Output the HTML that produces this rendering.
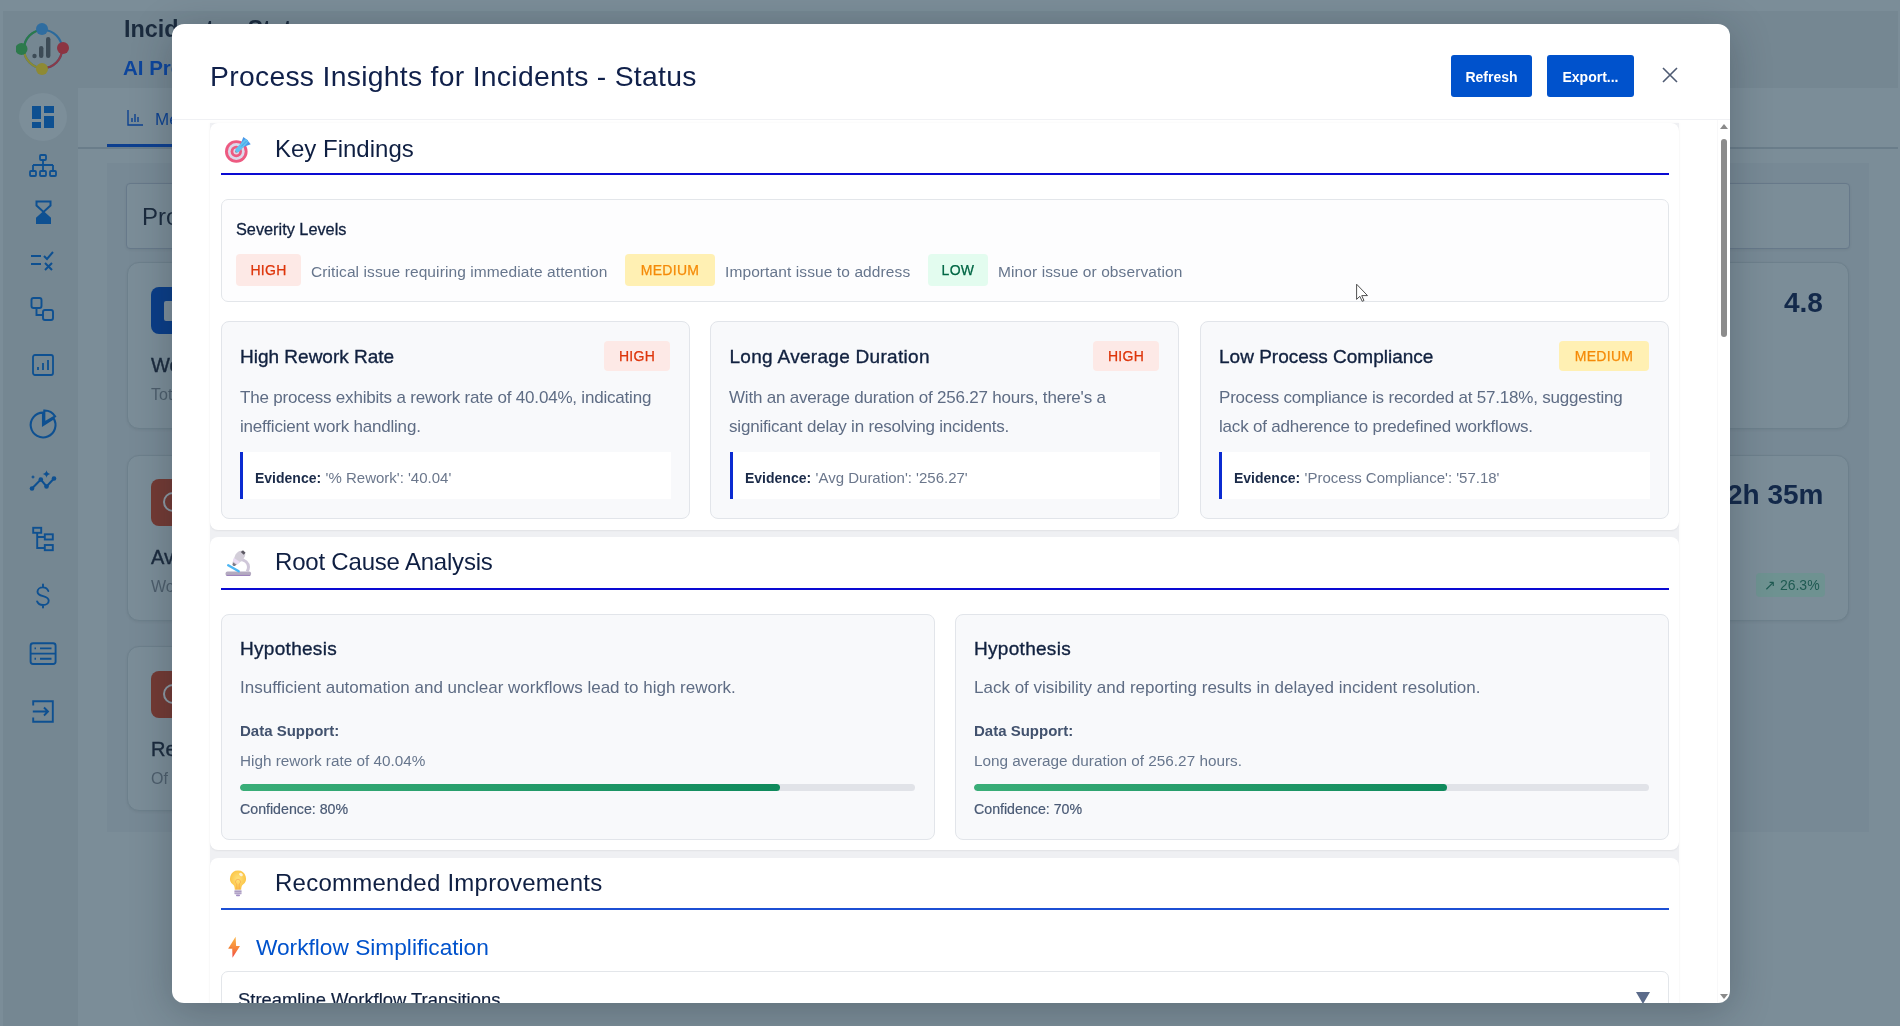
<!DOCTYPE html>
<html><head><meta charset="utf-8">
<style>
*{box-sizing:border-box;margin:0;padding:0}
html,body{width:1900px;height:1026px;overflow:hidden}
body{background:#7b8d98;font-family:"Liberation Sans",sans-serif;position:relative}
.a{position:absolute}
.t{position:absolute;line-height:1;white-space:nowrap}
/* background page */
#side{left:3px;top:11px;width:75px;height:1015px;background:#758792}
#hdr{left:78px;top:11px;width:1820px;height:77px;background:#758792}
#tabs{left:78px;top:88px;width:1820px;height:61px;background:#7b8d98;border-bottom:2px solid #6a7d8a}
#panel{left:107px;top:163px;width:1762px;height:669px;background:#778995}
.bgcard{position:absolute;background:#7b8d98;border:1px solid #6d808c;border-radius:12px;box-shadow:0 1px 3px rgba(0,0,0,.06)}
.sico{position:absolute;left:28px;width:30px;height:30px}
/* modal */
#modal{will-change:transform;left:172px;top:24px;width:1558px;height:979px;background:#fff;border-radius:12px;overflow:hidden;box-shadow:0 8px 40px rgba(20,30,40,.28)}
#inner{position:absolute;left:-172px;top:-24px;width:1900px;height:1026px}
#mhb{position:absolute;left:172px;top:119px;width:1558px;height:1px;background:#f0f1f4}
.btn{position:absolute;top:55px;height:42px;background:#0052cc;color:#fff;font-weight:bold;font-size:14px;line-height:45px;text-align:center;border-radius:3px}
.sec{position:absolute;left:210px;width:1469px;background:#fff;border-radius:8px;box-shadow:0 1px 2px rgba(0,0,0,.06)}
.ul{position:absolute;left:221px;width:1448px;height:2px}
.h2{font-size:24px;color:#0f1f42}
.box{position:absolute;border:1px solid #e3e6ea;border-radius:7px}
.fc{position:absolute;top:321px;width:469px;height:198px;background:#f8f9fb;border:1px solid #e2e5ea;border-radius:8px}
.badge{position:absolute;height:32px;border-radius:4px;font-size:14px;line-height:32px;text-align:center;letter-spacing:.3px;-webkit-text-stroke:.25px currentColor}
.high{background:#fde9e6;color:#de350b}
.med{background:#fff0b3;color:#f58a07}
.low{background:#e3fcef;color:#006644}
.sevd{font-size:15.5px;color:#67768d;letter-spacing:.1px}
.ftitle{font-size:19px;color:#11213f;-webkit-text-stroke:.35px #11213f}
.fdesc{position:absolute;font-size:17px;line-height:28.5px;color:#5e6c84;white-space:nowrap}
.ev{position:absolute;top:452px;height:47px;background:#fff;border-left:3px solid #0b2bd1}
.evk{font-size:14px;font-weight:bold;color:#1a2a48}
.evv{font-size:15px;color:#6b778c}
.hc{position:absolute;top:614px;width:714px;height:225px;background:#f8f9fb;border:1px solid #e2e5ea;border-radius:8px}
.prog{position:absolute;top:784px;width:675px;height:7px;border-radius:4px;background:#e1e3e8;overflow:hidden}
.prog i{display:block;height:100%;border-radius:4px;background:linear-gradient(90deg,#3aae78,#0f8a5c)}
</style></head><body>
<div id="root" style="position:absolute;left:0;top:0;width:1900px;height:1026px;will-change:transform">
<!-- ============ BACKGROUND PAGE ============ -->
<div id="side" class="a"></div>
<div id="hdr" class="a"></div>
<div id="tabs" class="a"></div>
<div id="panel" class="a"></div>
<div class="t" style="left:124px;top:18px;font-size:23.4px;font-weight:bold;color:#1b2b3e">Incidents - Status</div>
<div class="t" style="left:123px;top:58px;font-size:20.5px;font-weight:bold;color:#0d459c">AI Process Insights</div>
<div class="a" style="left:107px;top:144px;width:80px;height:3px;background:#0d3f8f"></div>
<svg class="a" style="left:126px;top:109px" width="18" height="18" viewBox="0 0 18 18" fill="none" stroke="#0e4290" stroke-width="1.4"><path d="M2 1v15h15M6 9v4M9 5v8M12 8v5"/></svg>
<div class="t" style="left:155px;top:111px;font-size:17px;color:#0e4290">Metrics</div>
<div class="bgcard" style="left:126px;top:183px;width:1724px;height:66px;border-radius:4px;border-color:#67798a"></div>
<div class="t" style="left:142px;top:205px;font-size:24px;color:#1b2b3e">Process</div>
<div class="bgcard" style="left:127px;top:262px;width:1722px;height:167px"></div>
<div class="bgcard" style="left:127px;top:455px;width:1722px;height:166px"></div>
<div class="bgcard" style="left:127px;top:646px;width:1400px;height:165px"></div>
<div class="a" style="left:151px;top:287px;width:48px;height:47px;border-radius:8px;background:#0a3d87"></div>
<div class="a" style="left:164px;top:301px;width:14px;height:20px;border-radius:2px;background:#7d8e9a"></div>
<div class="a" style="left:151px;top:479px;width:48px;height:47px;border-radius:8px;background:#733a34"></div>
<div class="a" style="left:163px;top:492px;width:20px;height:20px;border-radius:50%;border:2px solid #8c9aa4"></div>
<div class="a" style="left:151px;top:671px;width:48px;height:47px;border-radius:8px;background:#733a34"></div>
<div class="a" style="left:163px;top:684px;width:20px;height:20px;border-radius:50%;border:2px solid #8c9aa4"></div>
<div class="t" style="left:151px;top:355px;font-size:20px;color:#1b2b3e;-webkit-text-stroke:.4px #1b2b3e">Work Items</div>
<div class="t" style="left:151px;top:387px;font-size:16px;color:#4d5e6c">Total</div>
<div class="t" style="left:151px;top:547px;font-size:20px;color:#1b2b3e;-webkit-text-stroke:.4px #1b2b3e">Avg Duration</div>
<div class="t" style="left:151px;top:579px;font-size:16px;color:#4d5e6c">Work</div>
<div class="t" style="left:151px;top:739px;font-size:20px;color:#1b2b3e;-webkit-text-stroke:.4px #1b2b3e">Rework</div>
<div class="t" style="left:151px;top:771px;font-size:16px;color:#4d5e6c">Of</div>
<div class="t" style="left:1784px;top:289px;font-size:28px;font-weight:bold;color:#13294a">4.8</div>
<div class="t" style="left:1727px;top:481px;font-size:28px;font-weight:bold;color:#13294a">2h 35m</div>
<div class="a" style="left:1756px;top:573px;width:69px;height:24px;border-radius:4px;background:#6e9291"></div>
<div class="t" style="left:1764px;top:578px;font-size:14px;color:#1f5a52">↗ 26.3%</div>
<!-- sidebar icons -->
<svg class="a" style="left:16px;top:22px" width="54" height="54" viewBox="0 0 54 54">
 <circle cx="27" cy="27" r="19" fill="none" stroke="#2b6a9c" stroke-width="2.2"/>
 <path d="M8 27A19 19 0 0 1 27 8" fill="none" stroke="#2c7a4a" stroke-width="2.2"/>
 <path d="M27 46A19 19 0 0 1 8 27" fill="none" stroke="#8a8a34" stroke-width="2.2"/>
 <path d="M46 27A19 19 0 0 1 27 46" fill="none" stroke="#8a3a48" stroke-width="2.2"/>
 <circle cx="26" cy="7" r="6" fill="#2f6da0"/><circle cx="5.5" cy="27" r="6" fill="#2d7a4c"/>
 <circle cx="47" cy="26" r="6" fill="#8c3442"/><circle cx="26" cy="47" r="6" fill="#8e8a34"/>
 <circle cx="18.5" cy="34" r="2.2" fill="#3c4b56"/><rect x="23" y="24" width="4.4" height="12" rx="2.2" fill="#3c4b56"/><rect x="30" y="15" width="4.4" height="21" rx="2.2" fill="#3c4b56"/>
</svg>
<div class="a" style="left:19px;top:93px;width:48px;height:48px;border-radius:50%;background:#7c8e99"></div>
<svg class="a" style="left:32px;top:106px" width="22" height="22" viewBox="0 0 22 22" fill="#0e5091"><rect x="0" y="0" width="9" height="13"/><rect x="12" y="0" width="10" height="7"/><rect x="0" y="16" width="9" height="6"/><rect x="12" y="10" width="10" height="12"/></svg>
<svg class="a" style="left:28px;top:152px" width="30" height="30" viewBox="0 0 30 30" fill="none" stroke="#0e5091" stroke-width="1.8"><rect x="12" y="3" width="6" height="5" rx="1"/><path d="M15 8v5M5 13h20M5 13v6M15 13v6M25 13v6"/><rect x="2" y="19" width="6" height="5" rx="1"/><rect x="12" y="19" width="6" height="5" rx="1"/><rect x="22" y="19" width="6" height="5" rx="1"/></svg>
<svg class="a" style="left:31px;top:199px" width="26" height="28" viewBox="0 0 26 28"><path d="M5.5 2.5h14v4l-7 6.5-7-6.5z" fill="none" stroke="#0e5091" stroke-width="2"/><path d="M12.5 12L20 18.8V25H5v-6.2z" fill="#0e5091"/></svg>
<svg class="a" style="left:29px;top:250px" width="28" height="22" viewBox="0 0 28 22" fill="none" stroke="#0e5091" stroke-width="2"><path d="M2 6h10M2 14h10M15 6l3 3 6-7M16 13l7 7M23 13l-7 7"/></svg>
<svg class="a" style="left:28px;top:295px" width="30" height="30" viewBox="0 0 30 30" fill="none" stroke="#0e5091" stroke-width="1.9"><rect x="3.5" y="3" width="10" height="10" rx="2"/><rect x="15" y="15" width="10" height="10" rx="2"/><path d="M8.5 13v7h6.5"/></svg>
<svg class="a" style="left:30px;top:352px" width="26" height="26" viewBox="0 0 26 26" fill="none" stroke="#0e5091" stroke-width="1.8"><rect x="3" y="3" width="20" height="20" rx="2"/><path d="M8 18v-3M13 18v-7M18 18v-10"/></svg>
<svg class="a" style="left:28px;top:409px" width="32" height="32" viewBox="0 0 32 32" fill="none" stroke="#0e5091" stroke-width="2.1" stroke-linejoin="miter"><path d="M15 16V3.6A12.4 12.4 0 1 0 25.6 9.4z"/><path d="M16.3 13.6V1.5A12.4 12.4 0 0 1 27 7.3z"/></svg>
<svg class="a" style="left:28px;top:467px" width="32" height="28" viewBox="0 0 32 28" fill="#0e5091" stroke="none"><path d="M4 21.5L12.8 12.5 18.5 19.5 26 11.5" fill="none" stroke="#0e5091" stroke-width="2"/><circle cx="4" cy="21.5" r="2.3"/><circle cx="12.8" cy="12.5" r="2.3"/><circle cx="18.5" cy="19.5" r="2.3"/><circle cx="26" cy="11.5" r="2.3"/><path d="M18.5 3.2q.6 3.2 3.8 3.8-3.2.6-3.8 3.8-.6-3.2-3.8-3.8 3.2-.6 3.8-3.8z"/><path d="M5 8q.3 1.7 2 2-1.7.3-2 2-.3-1.7-2-2 1.7-.3 2-2z"/></svg>
<svg class="a" style="left:28px;top:522px" width="30" height="32" viewBox="28 522 30 32" fill="none" stroke="#0e5091" stroke-width="1.9"><rect x="33.2" y="527.8" width="8" height="5"/><rect x="44.8" y="534.3" width="8" height="5.2"/><rect x="44.8" y="545" width="8" height="5.2"/><path d="M37.2 532.8V548h7.6M37.2 537h7.6"/></svg>
<svg class="a" style="left:28px;top:580px" width="30" height="32" viewBox="28 580 30 32" fill="none" stroke="#0e5091" stroke-width="1.9" stroke-linecap="round"><path d="M48.3 591c-.8-2.2-2.9-3.6-5.5-3.6-3.1 0-5.3 1.8-5.3 4.3 0 5.8 11.2 3.2 11.2 9 0 2.6-2.4 4.3-5.7 4.3-2.8 0-5-1.3-5.9-3.6M43 584.5v2.8M43 605v2.6"/></svg>
<svg class="a" style="left:28px;top:638px" width="30" height="30" viewBox="28 638 30 30" fill="none" stroke="#0e5091" stroke-width="1.9"><rect x="30.6" y="643.2" width="25" height="20.8" rx="2.5"/><path d="M30.6 653.6h25M34.5 648.4h1.5M34.5 658.8h1.5M40 648.4h11.5M40 658.8h11.5"/></svg>
<svg class="a" style="left:28px;top:697px" width="30" height="30" viewBox="28 697 30 30" fill="none" stroke="#0e5091" stroke-width="1.9"><path d="M33.2 705.5v-4.2h19.6v20.4H33.2v-4.2M32.8 711.5h15M44 707.5l4 4-4 4"/></svg>

<!-- ============ MODAL ============ -->
<div id="modal" class="a"><div id="inner">
  <div class="t" style="left:210px;top:62px;font-size:28.3px;color:#10204a;letter-spacing:.3px">Process Insights for Incidents - Status</div>
  <div class="btn" style="left:1451px;width:81px">Refresh</div>
  <div class="btn" style="left:1547px;width:87px">Export...</div>
  <svg class="a" style="left:1662px;top:66.5px" width="16" height="16" viewBox="0 0 16 16" stroke="#4f5b73" stroke-width="1.6"><path d="M1 1l14 14M15 1L1 15"/></svg>
  <div id="mhb"></div>
  <div id="scroll" class="a" style="left:0;top:120px;width:1900px;height:883px;overflow:hidden">
   <div class="a" style="left:0;top:-120px;width:1900px;height:1026px">
    <!-- Section 1: Key Findings -->
    <div class="a" style="left:210px;top:123px;width:1469px;height:900px;background:#eff0f3;box-shadow:0 0 3px rgba(0,0,0,.04)"></div>
    <div class="sec" style="top:123px;height:407px"></div>
    <svg class="a" style="left:218px;top:130px" width="40" height="40" viewBox="0 0 40 40">
      <circle cx="18.3" cy="21.5" r="11.3" fill="#ed5a81"/><circle cx="18.3" cy="21.5" r="8.4" fill="#dcd8ea"/><circle cx="18.3" cy="21.5" r="5.7" fill="#ed5a81"/><circle cx="18.3" cy="21.5" r="2.9" fill="#dcd8ea"/><circle cx="18.3" cy="21.5" r="1.2" fill="#8f8d99"/>
      <path d="M22.8 13.8L25.3 6.9l4.8 3.6z" fill="#4a98e8"/><path d="M24.8 17.3l7.9-3.1-3.6-4.4z" fill="#4a98e8"/>
      <path d="M19.6 20l8-8.3" stroke="#62c2f2" stroke-width="4.6" stroke-linecap="round"/><path d="M23.2 16.5l5.3-5.5" stroke="#4aa2e4" stroke-width="1"/>
    </svg>
    <div class="t h2" style="left:275px;top:137px">Key Findings</div>
    <div class="ul" style="top:173px;background:#0a0ad2"></div>
    <div class="box" style="left:221px;top:199px;width:1448px;height:103px;background:#fdfdfe"></div>
    <div class="t" style="left:236px;top:221px;font-size:16.3px;color:#11213f;-webkit-text-stroke:.3px #11213f">Severity Levels</div>
    <div class="badge high" style="left:236px;top:254px;width:65px">HIGH</div>
    <div class="t sevd" style="left:311px;top:264px">Critical issue requiring immediate attention</div>
    <div class="badge med" style="left:625px;top:254px;width:90px">MEDIUM</div>
    <div class="t sevd" style="left:725px;top:264px">Important issue to address</div>
    <div class="badge low" style="left:928px;top:254px;width:60px">LOW</div>
    <div class="t sevd" style="left:998px;top:264px">Minor issue or observation</div>

    <div class="fc" style="left:221px"></div>
    <div class="fc" style="left:710.3px"></div>
    <div class="fc" style="left:1199.6px"></div>
    <div class="t ftitle" style="left:240px;top:347px">High Rework Rate</div>
    <div class="t ftitle" style="left:729.5px;top:347px;letter-spacing:.3px">Long Average Duration</div>
    <div class="t ftitle" style="left:1219px;top:347px">Low Process Compliance</div>
    <div class="badge high" style="left:604px;top:341px;width:66px;height:30px;line-height:30px">HIGH</div>
    <div class="badge high" style="left:1093px;top:341px;width:66px;height:30px;line-height:30px">HIGH</div>
    <div class="badge med" style="left:1559px;top:341px;width:90px;height:30px;line-height:30px">MEDIUM</div>
    <div class="fdesc" style="left:240px;top:384px;letter-spacing:-.2px">The process exhibits a rework rate of 40.04%, indicating<br>inefficient work handling.</div>
    <div class="fdesc" style="left:729px;top:384px;letter-spacing:-.2px">With an average duration of 256.27 hours, there's a<br>significant delay in resolving incidents.</div>
    <div class="fdesc" style="left:1219px;top:384px;letter-spacing:-.2px">Process compliance is recorded at 57.18%, suggesting<br>lack of adherence to predefined workflows.</div>
    <div class="ev" style="left:240px;width:431px"></div>
    <div class="ev" style="left:730px;width:430px"></div>
    <div class="ev" style="left:1219px;width:431px"></div>
    <div class="t" style="left:255px;top:470px"><span class="evk">Evidence:</span> <span class="evv">'% Rework': '40.04'</span></div>
    <div class="t" style="left:745px;top:470px"><span class="evk">Evidence:</span> <span class="evv">'Avg Duration': '256.27'</span></div>
    <div class="t" style="left:1234px;top:470px"><span class="evk">Evidence:</span> <span class="evv">'Process Compliance': '57.18'</span></div>

    <!-- Section 2: Root Cause -->
    <div class="sec" style="top:537px;height:313px"></div>
    <svg class="a" style="left:215px;top:540px" width="50" height="50" viewBox="0 0 50 50">
      <rect x="10.5" y="31.6" width="25.6" height="4.3" rx="2" fill="#b4aac0"/><path d="M11.5 35.4h23.6" stroke="#9b7fbb" stroke-width="1"/>
      <path d="M25 19.5c5 0 8.5 3.5 8.5 7.5 0 2-.6 3.5-1.6 4.6" fill="none" stroke="#cfc7d9" stroke-width="3"/>
      <path d="M20.5 14.5c2-3 5-4.5 7-3.5l2.5 2c1 2-.5 5-3 7.5l-5.5 4.5c-2 .5-3.8-.8-4-2.6z" fill="#d3ced9"/>
      <path d="M18.8 17.8l6.2 4.3-2.6 2.2-4.5-3z" fill="#eadcf4"/>
      <path d="M18.2 22.5l3.2 2.2-1.6 1.2c-1 .4-2.3-.3-2.4-1.4z" fill="#7d7885"/>
      <path d="M25.8 12l2.2-1.8 2.6 2.6-1.9 2z" fill="#5d5a64"/>
      <path d="M13.2 25.3l10.5 6" stroke="#4db6f4" stroke-width="2.4" stroke-linecap="round"/>
    </svg>
    <div class="t h2" style="left:275px;top:550px;letter-spacing:-.2px">Root Cause Analysis</div>
    <div class="ul" style="top:588px;background:#0a0ad2"></div>

    <div class="hc" style="left:221px;height:226px"></div>
    <div class="hc" style="left:954.6px;height:226px"></div>
    <div class="t ftitle" style="left:240px;top:639px;letter-spacing:.3px">Hypothesis</div>
    <div class="t ftitle" style="left:974px;top:639px;letter-spacing:.3px">Hypothesis</div>
    <div class="t" style="left:240px;top:679px;font-size:17px;color:#5e6c84">Insufficient automation and unclear workflows lead to high rework.</div>
    <div class="t" style="left:974px;top:679px;font-size:17px;color:#5e6c84">Lack of visibility and reporting results in delayed incident resolution.</div>
    <div class="t" style="left:240px;top:723px;font-size:15px;font-weight:bold;color:#42526e">Data Support:</div>
    <div class="t" style="left:974px;top:723px;font-size:15px;font-weight:bold;color:#42526e">Data Support:</div>
    <div class="t" style="left:240px;top:753px;font-size:15.3px;color:#67768d">High rework rate of 40.04%</div>
    <div class="t" style="left:974px;top:753px;font-size:15.3px;color:#67768d">Long average duration of 256.27 hours.</div>
    <div class="prog" style="left:240px"><i style="width:80%"></i></div>
    <div class="prog" style="left:974px"><i style="width:70%"></i></div>
    <div class="t" style="left:240px;top:802px;font-size:14.2px;color:#4a5a75;-webkit-text-stroke:.2px #4a5a75">Confidence: 80%</div>
    <div class="t" style="left:974px;top:802px;font-size:14.2px;color:#4a5a75;-webkit-text-stroke:.2px #4a5a75">Confidence: 70%</div>

    <!-- Section 3: Recommended -->
    <div class="sec" style="top:858px;height:200px"></div>
    <svg class="a" style="left:226px;top:868px" width="24" height="30" viewBox="0 0 24 30">
      <defs><radialGradient id="bg1" cx=".5" cy=".45" r=".6"><stop offset="0" stop-color="#ffe27a"/><stop offset="1" stop-color="#fbbf3c"/></radialGradient></defs>
      <path d="M12 2.5a8 8 0 0 0-4.5 14.6c.9 1 1.3 2.6 1.3 4.7h6.4c0-2.1.4-3.7 1.3-4.7A8 8 0 0 0 12 2.5z" fill="url(#bg1)"/>
      <path d="M10.8 21.5v-5.5a2.5 2.5 0 1 1 2.4 0v5.5" fill="none" stroke="#f7a14a" stroke-width=".8" opacity=".8"/>
      <ellipse cx="15" cy="6.5" rx="2" ry="1.5" fill="#fff" opacity=".75" transform="rotate(35 15 6.5)"/>
      <rect x="8.4" y="21.8" width="7.2" height="4.8" rx="1" fill="#cfc6db"/><path d="M8.6 23.4h6.8M8.6 25.2h6.8" stroke="#a08fbb" stroke-width=".9"/><rect x="10" y="26.4" width="4" height="1.8" rx=".8" fill="#a38fc4"/>
    </svg>
    <div class="t h2" style="left:275px;top:871px;letter-spacing:.25px">Recommended Improvements</div>
    <div class="ul" style="top:908px;background:#1c4fd4"></div>
    <svg class="a" style="left:222px;top:932px" width="24" height="30" viewBox="0 0 24 30">
      <defs><linearGradient id="lg1" x1="0" y1="0" x2="0" y2="1"><stop offset="0" stop-color="#fbb545"/><stop offset=".55" stop-color="#f7873d"/><stop offset="1" stop-color="#ef4545"/></linearGradient></defs>
      <path d="M13.6 4.8L6.3 16.6h3.9l.3 9.1 7.5-11.6h-3.9z" fill="url(#lg1)"/><path d="M6.3 16.6h3.9l-.1-1H7z" fill="#e8701a" opacity=".7"/>
    </svg>
    <div class="t" style="left:256px;top:936px;font-size:22.7px;color:#0052cc">Workflow Simplification</div>
    <div class="box" style="left:221px;top:971px;width:1448px;height:80px;background:#fff"></div>
    <div class="t" style="left:238px;top:991px;font-size:18.4px;color:#11213f;-webkit-text-stroke:.2px #11213f">Streamline Workflow Transitions</div>
    <svg class="a" style="left:1635px;top:991px" width="16" height="14" viewBox="0 0 16 14"><path d="M1 1h14L8 13z" fill="#5b6b8a"/></svg>
    <!-- cursor -->
    <svg class="a" style="left:1355px;top:283px" width="16" height="22" viewBox="0 0 16 22"><path d="M1.6 1.2V16.4l3.2-3.1 2.4 5 1.8-.8-2.3-4.9h5.8z" fill="#fff" stroke="#505050" stroke-width="1" stroke-linejoin="round"/></svg>
   </div>
  </div>
  <!-- scrollbar -->
  <div class="a" style="left:1717px;top:120px;width:1px;height:883px;background:#f8f8f9"></div>
  
  <svg class="a" style="left:1719px;top:122px" width="10" height="8" viewBox="0 0 10 8"><path d="M1 7L5 2l4 5z" fill="#8a8a8a"/></svg>
  <div class="a" style="left:1721px;top:139px;width:6px;height:198px;border-radius:3px;background:#8c8c8c"></div>
  <svg class="a" style="left:1719px;top:993px" width="10" height="8" viewBox="0 0 10 8"><path d="M1 1L5 6l4-5z" fill="#8a8a8a"/></svg>
</div></div>
</div>
</body></html>
